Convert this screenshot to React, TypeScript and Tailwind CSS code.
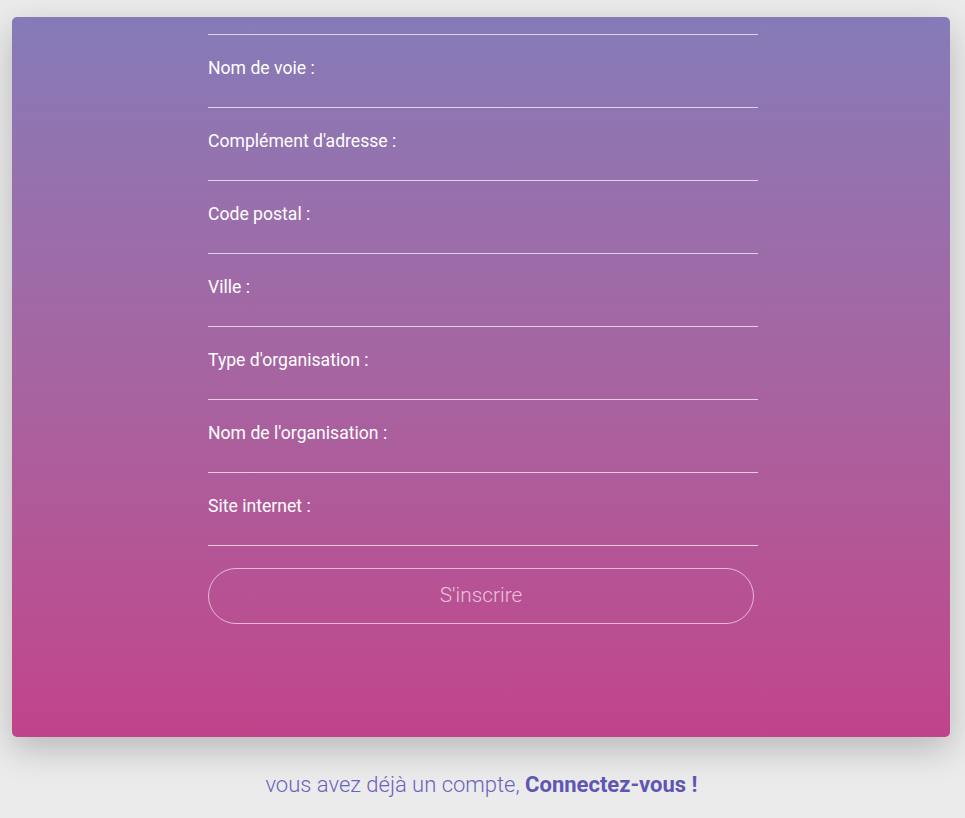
import React from "react";

const fields = [
  "Nom de voie :",
  "Complément d'adresse :",
  "Code postal :",
  "Ville :",
  "Type d'organisation :",
  "Nom de l'organisation :",
  "Site internet :",
];

export default function App() {
  return (
    <div
      className="min-h-[818px] w-full bg-[#ebebeb] overflow-hidden"
      style={{ fontFamily: "Roboto, 'Noto Sans', sans-serif" }}
    >
      <div className="pt-[17px] pl-[12px]">
        <div className="w-[938px] h-[720px] rounded-[5px] bg-gradient-to-b from-[#857bb8] to-[#c1438a] shadow-[0_12px_35px_rgba(0,0,0,0.22)]">
          <div className="ml-[196px] w-[550px]">
            <div className="h-[18px] border-b border-white/70" />
            {fields.map((f) => (
              <div key={f} className="pt-[21px]">
                <label className="block h-[24px] text-[17.6px] leading-[24px] text-white">{f}</label>
                <div className="h-[28px] border-b border-white/70" />
              </div>
            ))}
            <button className="mt-[22px] w-[546px] h-[56px] rounded-full border border-white/60 text-[20.8px] font-light text-[#ecc0dc]">
              S'inscrire
            </button>
          </div>
        </div>
      </div>
      <p className="mt-[33px] text-center text-[22px] leading-[30px] text-[#6b63bf] font-light pr-[2px]">
        vous avez déjà un compte, <span className="font-bold text-[#5f56b3]">Connectez-vous !</span>
      </p>
    </div>
  );
}
